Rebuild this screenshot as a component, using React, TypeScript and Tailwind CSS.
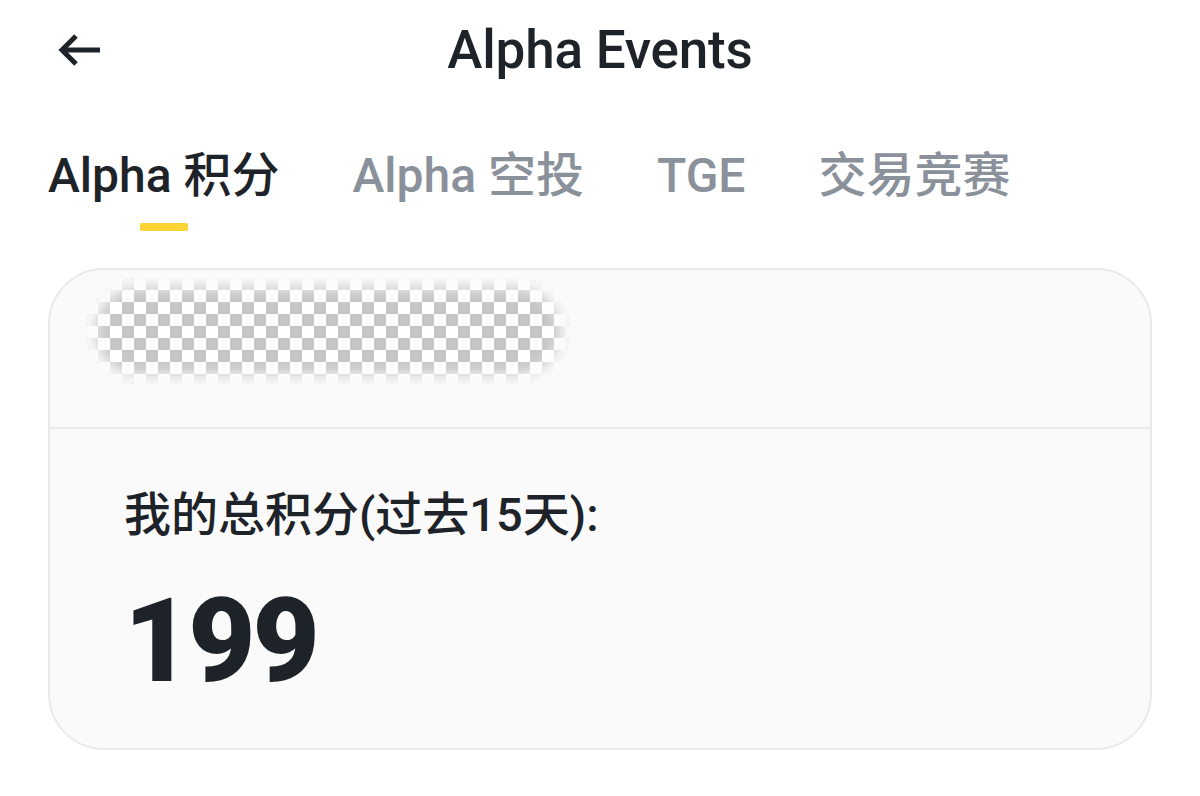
import React from 'react';

const tabs = ['Alpha 积分', 'Alpha 空投', 'TGE', '交易竞赛'];

const font = 'font-[Roboto,"Noto_Sans_CJK_SC",sans-serif]';

function BackArrow() {
    return (
        <svg width="48" height="34" viewBox="0 0 48 34" fill="none" stroke="#1e2329" strokeWidth="5" strokeLinejoin="miter">
            <path d="M46 17H8" />
            <path d="M22 3L8 17L22 31" />
        </svg>
    );
}

export default function App() {
    return (
        <div className={`min-h-[796px] w-[1200px] bg-white text-[#1e2329] ${font}`}>
            {/* Header */}
            <div className="grid grid-cols-[1fr_auto_1fr] items-center h-[100px] px-[54px]">
                <div className="flex items-center">
                    <BackArrow />
                </div>
                <h1 className="text-[53px] font-medium tracking-[-0.2px] leading-none">Alpha Events</h1>
                <div />
            </div>

            {/* Tabs */}
            <div className="flex items-start gap-[73px] px-[48px] pt-[48px]">
                {tabs.map((t, i) => (
                    <div key={t} className="flex flex-col items-center">
                        <span className={`text-[48px] leading-[56px] font-medium ${i === 0 ? 'text-[#1e2329]' : 'text-[#8b919a]'}`}>{t}</span>
                        {i === 0 && <div className="mt-[19px] h-[8px] w-[48px] rounded-[2px] bg-[#fcd535]" />}
                    </div>
                ))}
            </div>

            {/* Card */}
            <div className="mx-[48px] mt-[37px] rounded-[56px] border-2 border-[#e9eaed] bg-[#fafafa] overflow-hidden">
                <div className="h-[159px] border-b-2 border-[#e9eaed] px-[36px] pt-[8px]">
                    <div className="h-[106px] w-[484px] rounded-full bg-[repeating-conic-gradient(#c6c6c6_0_25%,#ffffff_0_50%)] bg-[length:24px_24px] shadow-[inset_0_0_14px_10px_#fafafa]" />
                </div>
                <div className="px-[74px] pt-[58px] pb-[57px]">
                    <div className="text-[47px] font-medium leading-[56px]">我的总积分(过去15天):</div>
                    <div className="mt-[48px] text-[116px] font-black leading-[100px] tracking-[-3px]">199</div>
                </div>
            </div>
        </div>
    );
}
